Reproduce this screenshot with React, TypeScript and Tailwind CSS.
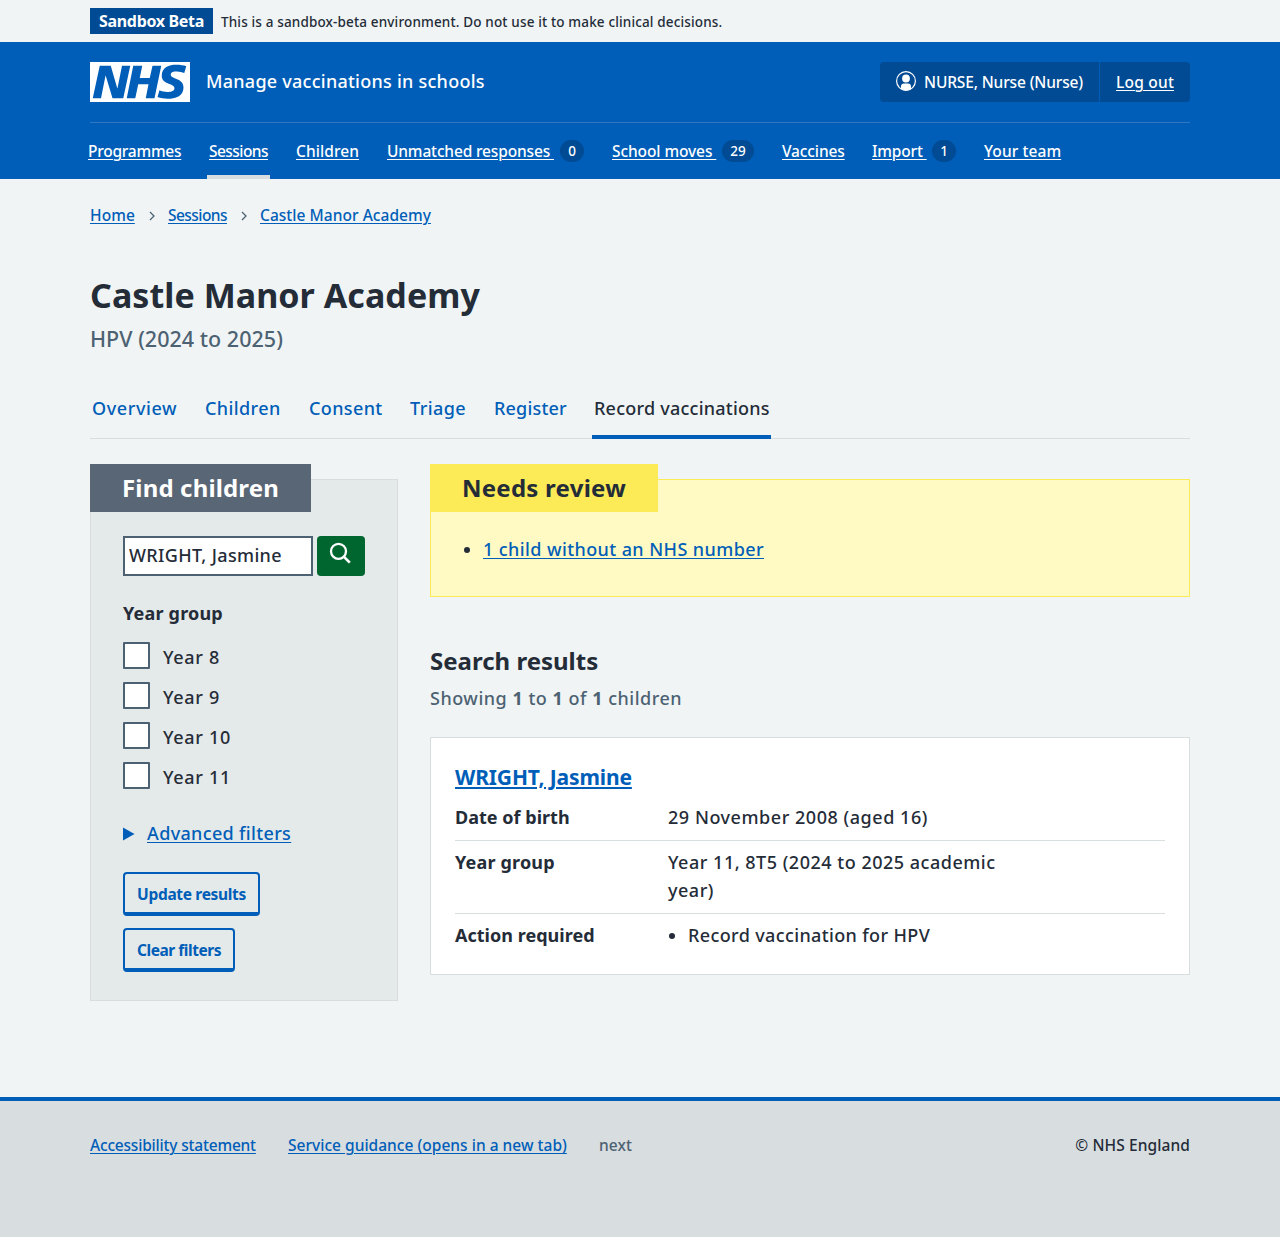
import type { ReactNode } from "react";

const link = "text-[#005eb8] underline decoration-1 underline-offset-[2px]";

function Logo() {
  return (
    <svg viewBox="0 0 200 80" width="100" height="40" className="block shrink-0" role="img" aria-label="NHS">
      <path
        fill="#fff"
        d="M200 0v80H0V0h200Zm-27.5 5.5c-14.5 0-29 5-29 22 0 10.2 7.7 13.5 14.7 16.3l.7.3c5.4 2 10.1 3.9 10.1 8.4 0 6.5-8.5 7.5-14 7.5s-12.5-1.5-16-3.5L135 70c5.5 2 13.5 3.5 20 3.5 15.5 0 32-4.5 32-22.5 0-19.5-25.5-16.5-25.5-25.5 0-5.5 5.5-6.5 12.5-6.5a35 35 0 0 1 14.5 3l4-13.5c-4.5-2-12-3-20-3Zm-131 2h-22l-14 65H22l9-45h.5l13.5 45h21.5l14-65H64l-9 45h-.5l-13-45Zm63 0h-18l-13 65h17l6-28H117l-5.5 28H129l13.5-65H125L119.5 32h-20l5-24.5Z"
      />
    </svg>
  );
}

function UserIcon() {
  return (
    <svg viewBox="0 0 20 20" width="20" height="20" className="mr-2 -mt-0.5 block shrink-0">
      <circle cx="10" cy="10" r="9.4" fill="none" stroke="#fff" strokeWidth="1.2" />
      <circle cx="10" cy="7.5" r="3.9" fill="#fff" />
      <path fill="#fff" d="M5 17.9v-2.3c0-2 1.2-3.1 3-3.1h4c1.8 0 3 1.1 3 3.1v2.3A9.3 9.3 0 0 1 10 19.5a9.3 9.3 0 0 1-5-1.6Z" />
    </svg>
  );
}

function Chevron() {
  return (
    <svg viewBox="0 0 6 10" width="6" height="10" className="mx-[13.5px] mt-0.5 block">
      <path d="M1 1l4 4-4 4" fill="none" stroke="#4c6272" strokeWidth="1.3" />
    </svg>
  );
}

type NavItem = { label: string; w: string; t: string; count?: string; current?: boolean };

const nav: NavItem[] = [
  { label: "Programmes", w: "w-[93px]", t: "tracking-[-0.24px]" },
  { label: "Sessions", w: "w-[59px]", t: "tracking-[-0.55px]", current: true },
  { label: "Children", w: "w-[63px]", t: "tracking-[0.08px]" },
  { label: "Unmatched responses", w: "w-[167px]", t: "tracking-[-0.15px]", count: "0" },
  { label: "School moves", w: "w-[104px]", t: "tracking-[-0.09px]", count: "29" },
  { label: "Vaccines", w: "w-[62px]", t: "tracking-[-0.12px]" },
  { label: "Import", w: "w-[54px]", t: "tracking-[-0.16px]", count: "1" },
  { label: "Your team", w: "w-[77px]", t: "tracking-[0.08px]" },
];

const tabs = [
  { label: "Overview", w: "w-[85px]", t: "tracking-[0.6px]" },
  { label: "Children", w: "w-[76px]", t: "tracking-[0.4px]" },
  { label: "Consent", w: "w-[73px]", t: "tracking-[0.38px]" },
  { label: "Triage", w: "w-[56px]", t: "tracking-[0.42px]" },
  { label: "Register", w: "w-[72px]", t: "tracking-[0.18px]" },
  { label: "Record vaccinations", w: "w-[175px]", t: "tracking-[0.23px]", current: true },
];

function SummaryRow({ name, t, last, children }: { name: string; t: string; last?: boolean; children: ReactNode }) {
  return (
    <div className={last ? "flex pt-[7px]" : "flex border-b border-[#d8dde0] pt-[7px] pb-[9px]"}>
      <dt className={`w-[213px] shrink-0 font-bold ${t}`}>{name}</dt>
      <dd className="w-[355px]">{children}</dd>
    </div>
  );
}

function ActionButton({ label, className }: { label: string; className: string }) {
  return (
    <button
      className={`flex h-11 items-center justify-center whitespace-nowrap rounded-[4px] border-2 border-b-4 border-[#005eb8] pt-0.5 text-[15.5px] font-bold text-[#005eb8] ${className}`}
    >
      {label}
    </button>
  );
}

export default function App() {
  return (
    <div className="flex min-h-[1237px] flex-col bg-[#f0f4f5] font-['Noto_Sans',sans-serif] text-[18px] font-medium leading-7 text-[#242c38]">
      <div className="mx-auto flex h-[42px] w-[1100px] items-center">
        <strong className="flex h-[26px] w-[123px] items-center justify-center whitespace-nowrap bg-[#004b93] text-[16px] font-bold leading-none tracking-[-0.32px] text-white">
          Sandbox Beta
        </strong>
        <span className="ml-2 mt-0.5 whitespace-nowrap text-[13.5px] tracking-[0.15px]">
          This is a sandbox-beta environment. Do not use it to make clinical decisions.
        </span>
      </div>

      <header className="h-[137px] bg-[#005eb8] text-white">
        <div className="mx-auto w-[1100px]">
          <div className="flex h-[81px] items-center border-b border-[#2f77c1]">
            <Logo />
            <span className="ml-4 -mt-0.5 whitespace-nowrap tracking-[0.25px]">Manage vaccinations in schools</span>
            <div className="ml-auto flex h-10 w-[310px] overflow-hidden rounded-[4px] bg-[#004b93] text-[15.5px]">
              <div className="flex w-[220px] items-center whitespace-nowrap border-r border-[#005eb8] pl-4 tracking-[-0.14px]">
                <UserIcon />
                NURSE, Nurse (Nurse)
              </div>
              <a className="flex flex-1 items-center pl-4 tracking-[0.22px] underline decoration-1 underline-offset-[2px]">Log out</a>
            </div>
          </div>
          <nav className="-ml-1 flex h-14 text-[15.5px]">
            {nav.map((n) => (
              <a
                key={n.label}
                className={`mr-6 flex h-14 shrink-0 items-center whitespace-pre px-0.5 ${n.current ? "border-b-4 border-[#d8dde0] pt-1" : ""}`}
              >
                <span className={`${n.w} ${n.t} underline decoration-1 underline-offset-[2px]`}>
                  {n.count ? `${n.label} ` : n.label}
                </span>
                {n.count && (
                  <span
                    className={`ml-1.5 flex h-[22px] items-center justify-center rounded-full bg-[#004b93] pt-0.5 text-[13.5px] leading-none ${
                      n.count.length > 1 ? "w-8" : "w-6"
                    }`}
                  >
                    {n.count}
                  </span>
                )}
              </a>
            ))}
          </nav>
        </div>
      </header>

      <main className="mx-auto w-[1100px] flex-1">
        <nav className="flex h-[72px] items-center whitespace-nowrap text-[15.5px]">
          <a className={`${link} w-[45px] tracking-[0.05px]`}>Home</a>
          <Chevron />
          <a className={`${link} w-[59px] tracking-[-0.55px]`}>Sessions</a>
          <Chevron />
          <a className={`${link} tracking-[0.04px]`}>Castle Manor Academy</a>
        </nav>

        <h1 className="mt-[21px] text-[34px] font-bold leading-[46px] tracking-[0.05px]">Castle Manor Academy</h1>
        <p className="mt-[5px] text-[21.5px] leading-8 tracking-[0.03px] text-[#4c6272]">HPV (2024 to 2025)</p>

        <nav className="mt-6 flex h-[60px] border-b border-[#d8dde0]">
          {tabs.map((t) => (
            <a
              key={t.label}
              className={`mr-6 flex h-[60px] items-center whitespace-nowrap px-0.5 ${
                t.current ? "border-b-4 border-[#005eb8] pt-0.5" : "pb-0.5 text-[#005eb8]"
              }`}
            >
              <span className={`${t.w} ${t.t}`}>{t.label}</span>
            </a>
          ))}
        </nav>

        <div className="mt-10 flex gap-8">
          <section className="h-[522px] w-[308px] border border-[#d8dde0] bg-[#e4e9e9] pl-8">
            <h2 className="-ml-[33px] -mt-4 flex h-12 w-[221px] items-center whitespace-nowrap bg-[#596675] pl-8 text-[24px] font-bold tracking-[0.15px] text-white">
              Find children
            </h2>
            <div className="mt-6 flex gap-1">
              <div className="flex h-10 w-[190px] items-center whitespace-nowrap border-2 border-[#4c6272] bg-white pb-0.5 pl-1 tracking-[0.35px]">
                WRIGHT, Jasmine
              </div>
              <button className="flex h-10 w-12 rounded-[4px] bg-[#00662f] pl-3 pt-1.5">
                <svg viewBox="0 0 24 24" width="24" height="24" className="block" fill="none" stroke="#fff" strokeWidth="2.3">
                  <circle cx="9.5" cy="9.3" r="7.5" />
                  <path d="M14.8 14.6l6 6" strokeWidth="2.7" />
                </svg>
              </button>
            </div>
            <h3 className="mt-[23px] font-bold tracking-[0.19px]">Year group</h3>
            <div className="mt-[15px] flex flex-col gap-[13px]">
              {["Year 8", "Year 9", "Year 10", "Year 11"].map((y) => (
                <label key={y} className="flex h-[27px] items-center whitespace-nowrap tracking-[0.7px]">
                  <span className="mr-[13px] size-[27px] rounded-[1px] border-2 border-[#4c6272] bg-white" />
                  <span className="mt-[3px]">{y}</span>
                </label>
              ))}
            </div>
            <div className="mt-[30px] flex items-center">
              <svg viewBox="0 0 12 14" width="12" height="14" className="mr-3 mt-0.5 block">
                <path d="M0 0.5L11.5 7L0 13.5Z" fill="#005eb8" />
              </svg>
              <span className={`${link} tracking-[0.34px]`}>Advanced filters</span>
            </div>
            <ActionButton label="Update results" className="mt-[25px] w-[137px] tracking-[-0.33px]" />
            <ActionButton label="Clear filters" className="mt-3 w-[112px] tracking-[-0.46px]" />
          </section>

          <div className="w-[760px]">
            <section className="h-[118px] border border-[#fdea57] bg-[#fff9c4]">
              <h2 className="-ml-px -mt-4 flex h-12 w-[228px] items-center whitespace-nowrap bg-[#fdea57] pl-8 text-[24px] font-bold tracking-[0.25px]">
                Needs review
              </h2>
              <div className="mt-[23px] flex items-center pl-8">
                <span className="ml-px mr-[13px] mt-0.5 size-1.5 rounded-full bg-[#242c38]" />
                <a className={`${link} tracking-[0.41px]`}>1 child without an NHS number</a>
              </div>
            </section>

            <h2 className="mt-12 text-[24px] font-bold leading-8">Search results</h2>
            <p className="mt-[7px] tracking-[0.51px] text-[#4c6272]">
              Showing <b>1</b> to <b>1</b> of <b>1</b> children
            </p>

            <section className="mt-[25px] h-[238px] border border-[#d8dde0] bg-white px-6 pt-[23px]">
              <h3 className="text-[21px] font-bold leading-8 tracking-[-0.13px]">
                <a className="text-[#005eb8] underline decoration-2 underline-offset-[2px]">WRIGHT, Jasmine</a>
              </h3>
              <dl className="mt-[3px]">
                <SummaryRow name="Date of birth" t="tracking-[0.02px]">
                  <span className="tracking-[0.54px]">29 November 2008 (aged 16)</span>
                </SummaryRow>
                <SummaryRow name="Year group" t="tracking-[0.18px]">
                  <span className="tracking-[0.51px]">Year 11, 8T5 (2024 to 2025 academic year)</span>
                </SummaryRow>
                <SummaryRow name="Action required" t="tracking-[0.02px]" last>
                  <span className="flex items-center tracking-[0.37px]">
                    <span className="ml-px mr-[13px] mt-0.5 size-1.5 rounded-full bg-[#242c38]" />
                    Record vaccination for HPV
                  </span>
                </SummaryRow>
              </dl>
            </section>
          </div>
        </div>
      </main>

      <footer className="h-[140px] border-t-4 border-[#005eb8] bg-[#d8dde0] text-[15.5px]">
        <div className="mx-auto flex w-[1100px] whitespace-nowrap pt-[30px]">
          <a className={`${link} w-[166px] tracking-[-0.19px]`}>Accessibility statement</a>
          <a className={`${link} ml-8 w-[279px] tracking-[0.02px]`}>Service guidance (opens in a new tab)</a>
          <span className="ml-8 text-[#4c6272] tracking-[0.1px]">next</span>
          <span className="ml-auto tracking-[0.1px]">© NHS England</span>
        </div>
      </footer>
    </div>
  );
}
